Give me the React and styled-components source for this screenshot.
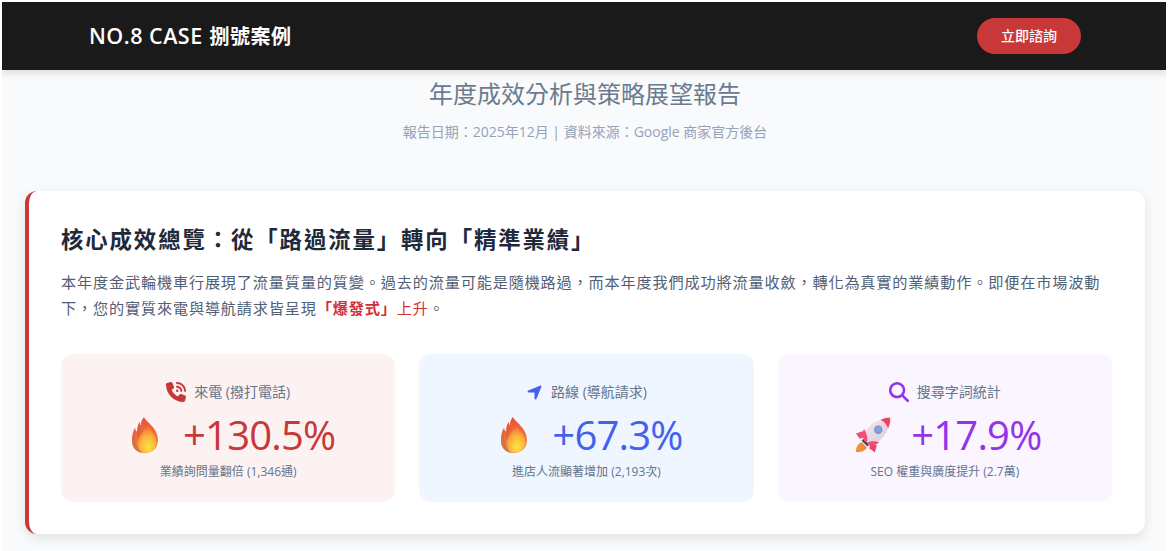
import React from "react";
import styled, { createGlobalStyle } from "styled-components";
import { FaPhoneVolume, FaLocationArrow, FaMagnifyingGlass } from "react-icons/fa6";

const FONT = `"Open Sans", "Noto Sans CJK TC", sans-serif`;

const GlobalStyle = createGlobalStyle`
  html, body {
    margin: 0;
    height: 100%;
    background: #fff;
    overflow: hidden;
  }
  body {
    padding: 2px 2px 0;
    box-sizing: border-box;
    font-family: ${FONT};
    text-spacing-trim: space-all;
  }
`;

const Page = styled.div`
  height: 549px;
  background: #f8fafc;
  overflow: hidden;
`;

const Navbar = styled.header`
  height: 68px;
  background: #1a1a1a;
  box-shadow: 0 4px 6px rgba(0, 0, 0, 0.1);
  display: flex;
  align-items: center;
  justify-content: space-between;
  padding: 0 85px 0 87px;
  position: relative;
`;

const Logo = styled.div`
  color: #fff;
  font-size: 20px;
  font-weight: 600;
  letter-spacing: 0.5px;
  word-spacing: 1px;
  margin-top: -2px;
`;

const LogoLatin = styled.span`
  font-size: 21.5px;
  word-spacing: 0;
`;

const CtaButton = styled.button`
  width: 104px;
  height: 36px;
  border: none;
  border-radius: 18px;
  background: #c93838;
  color: #fff;
  font-family: ${FONT};
  font-size: 14px;
  font-weight: 500;
  padding: 0 0 2px;
`;

const Main = styled.main`
  padding: 0 21px 0 23px;
`;

const Hero = styled.section`
  text-align: center;
  padding-top: 8px;
  height: 113px;
`;

const Subtitle = styled.h2`
  margin: 0;
  color: #6b7a8f;
  font-size: 24px;
  font-weight: 400;
  line-height: 32px;
`;

const Meta = styled.p`
  margin: 12px 0 0;
  color: #94a3b8;
  font-size: 14px;
  line-height: 20px;
`;

const SummaryCard = styled.section`
  background: #fff;
  border-left: 4px solid #c93838;
  border-radius: 12px;
  box-shadow: 0 4px 12px rgba(0, 0, 0, 0.1);
  padding: 32px 33px 32px 32px;
`;

const SummaryTitle = styled.h3`
  margin: 0 0 12px;
  color: #1e293b;
  font-size: 22.4px;
  font-weight: 700;
  line-height: 34px;
  letter-spacing: 1.9px;
`;

const SummaryText = styled.p`
  margin: 0 0 33px;
  color: #526075;
  font-size: 15.2px;
  line-height: 26px;
  letter-spacing: 0.8px;
`;

const Highlight = styled.span`
  color: #d32f2f;
  font-weight: ${(p) => (p.$bold ? 700 : 400)};
`;

const StatGrid = styled.div`
  display: grid;
  grid-template-columns: repeat(3, 1fr);
  gap: 24px;
`;

const StatCard = styled.div`
  height: 148px;
  border-radius: 12px;
  background: ${(p) => p.$bg};
  display: flex;
  flex-direction: column;
  align-items: center;
  padding-top: 24px;
  box-sizing: border-box;
`;

const StatLabel = styled.div`
  display: flex;
  align-items: center;
  gap: 8px;
  color: #64748b;
  font-size: 14px;
  line-height: 28px;
  svg {
    color: ${(p) => p.$color};
    font-size: 20px;
  }
`;

const StatValue = styled.div`
  display: flex;
  align-items: center;
  gap: 25px;
  color: ${(p) => p.$color};
  font-size: 40px;
  line-height: 50px;
  letter-spacing: -0.8px;
  margin-top: 4px;
  padding-left: 11px;
`;

const StatNote = styled.div`
  color: #64748b;
  font-size: 12px;
  line-height: 18px;
  margin-top: 3px;
`;

const RocketSvg = styled.svg`
  margin: 0 -5px 0 -4px;
`;

const Flame = ({ id }) => (
  <svg width="26" height="36" viewBox="0 0 26 36">
    <defs>
      <linearGradient id={`${id}-o`} x1="0.5" y1="0" x2="0.5" y2="1">
        <stop offset="0" stopColor="#e8503a" />
        <stop offset="0.55" stopColor="#f2743a" />
        <stop offset="1" stopColor="#f59a3c" />
      </linearGradient>
      <radialGradient id={`${id}-i`} cx="0.55" cy="0.8" r="0.72">
        <stop offset="0" stopColor="#fde444" />
        <stop offset="0.55" stopColor="#fbb53c" />
        <stop offset="1" stopColor="#f4703a" />
      </radialGradient>
    </defs>
    <path
      d="M12 0 C14 5 26 11 26 23 C26 31 20 36 13 36 C5 36 0 31 0 24 C0 18 1 14 3 11 C3.5 13 4 14 5 14.5 C5.5 10 6 7 7.5 5 C7.8 7 8 8 8.5 8.5 C9 5 10 2 12 0 Z"
      fill={`url(#${id}-o)`}
    />
    <path d="M3 11 C1 15 0 19 0 24 C0 30 4 35 10 36 C5 31 3 24 3.5 17 Z" fill="#cf6a48" opacity="0.75" />
    <path d="M7.5 5 C6 8 5 11 5 15 C4 22 6 30 11 36 C7 29 7 20 9 13 Z" fill="#d9583a" opacity="0.55" />
    <path
      d="M16 8 C17 13 24.5 17 24.5 25 C24.5 31 19.5 35.6 14 35.6 C8.5 35.6 5.5 31 5.5 26 C5.5 19 12 16 13 10.5 C14 12 14.5 12.5 15 12.5 C15.3 11 15.5 9.5 16 8 Z"
      fill={`url(#${id}-i)`}
    />
  </svg>
);

const Rocket = () => (
  <RocketSvg width="36" height="36" viewBox="0 0 38 38">
    <defs>
      <linearGradient id="rocket-body" x1="0" y1="0" x2="1" y2="1">
        <stop offset="0" stopColor="#f3ebef" />
        <stop offset="1" stopColor="#d8c6de" />
      </linearGradient>
    </defs>
    <path d="M1 37 C1 32 3 28 7 26.5 L12.5 32 C11 36 6 37.5 1 37 Z" fill="#f0913a" />
    <path d="M8 15 L1 17.5 L5 23 L12 21 Z" fill="#ef4f6c" />
    <path d="M23 30 L21 37.5 L15 33 L17 26 Z" fill="#e8466a" />
    <path d="M7 25 L13 31 L15.5 29 L9.5 22.5 Z" fill="#3d3a78" />
    <path d="M8.5 23 C10 13 18 5 27 3 C31 2 34 2 35.5 3 C36.5 5 36.5 8 35 11.5 C32 20 25 28 15.5 29.5 Z" fill="url(#rocket-body)" />
    <path d="M27 3 C30 1.2 34 0.6 37.2 0.8 C37.5 4 36.6 8.5 35 12 C33 8 31 5 27 3 Z" fill="#ec4562" />
    <path d="M8.5 24.5 C8 20 9 15 11 12.5 C12.5 16 13 21 12 25.5 L10 27 Z" fill="#f04f6e" transform="rotate(-12 10 20)" />
    <path d="M13.5 30 C18 30.5 23 29.5 25.5 27 C22 25.5 17 25 13 27 Z" fill="#f04f6e" />
    <circle cx="24.5" cy="13.5" r="4.4" fill="#8d8ba8" />
    <circle cx="24.5" cy="13.5" r="3.2" fill="#74a8f5" />
  </RocketSvg>
);

const stats = [
  {
    label: "來電 (撥打電話)",
    icon: <FaPhoneVolume />,
    color: "#c93838",
    bg: "#fdf2f2",
    value: "+130.5%",
    emoji: <Flame id="flame-a" />,
    note: "業績詢問量翻倍 (1,346通)",
  },
  {
    label: "路線 (導航請求)",
    icon: <FaLocationArrow size={17} />,
    color: "#4361ee",
    bg: "#eff6ff",
    value: "+67.3%",
    emoji: <Flame id="flame-b" />,
    note: "進店人流顯著增加 (2,193次)",
  },
  {
    label: "搜尋字詞統計",
    icon: <FaMagnifyingGlass />,
    color: "#9333ea",
    bg: "#faf5ff",
    value: "+17.9%",
    emoji: <Rocket />,
    note: "SEO 權重與廣度提升 (2.7萬)",
  },
];

export default function App() {
  return (
    <Page>
      <GlobalStyle />
      <Navbar>
        <Logo>
          <LogoLatin>NO.8 CASE</LogoLatin> 捌號案例
        </Logo>
        <CtaButton>立即諮詢</CtaButton>
      </Navbar>
      <Main>
        <Hero>
          <Subtitle>年度成效分析與策略展望報告</Subtitle>
          <Meta>報告日期：2025年12月 | 資料來源：Google 商家官方後台</Meta>
        </Hero>
        <SummaryCard>
          <SummaryTitle>核心成效總覽：從「路過流量」轉向「精準業績」</SummaryTitle>
          <SummaryText>
            本年度金武輪機車行展現了流量質量的質變。過去的流量可能是隨機路過，而本年度我們成功將流量收斂，轉化為真實的業績動作。即便在市場波動下，您的實質來電與導航請求皆呈現
            <Highlight $bold>「爆發式」</Highlight>
            <Highlight>上升</Highlight>。
          </SummaryText>
          <StatGrid>
            {stats.map((s) => (
              <StatCard key={s.label} $bg={s.bg}>
                <StatLabel $color={s.color}>
                  {s.icon}
                  {s.label}
                </StatLabel>
                <StatValue $color={s.color}>
                  {s.emoji}
                  {s.value}
                </StatValue>
                <StatNote>{s.note}</StatNote>
              </StatCard>
            ))}
          </StatGrid>
        </SummaryCard>
      </Main>
    </Page>
  );
}
